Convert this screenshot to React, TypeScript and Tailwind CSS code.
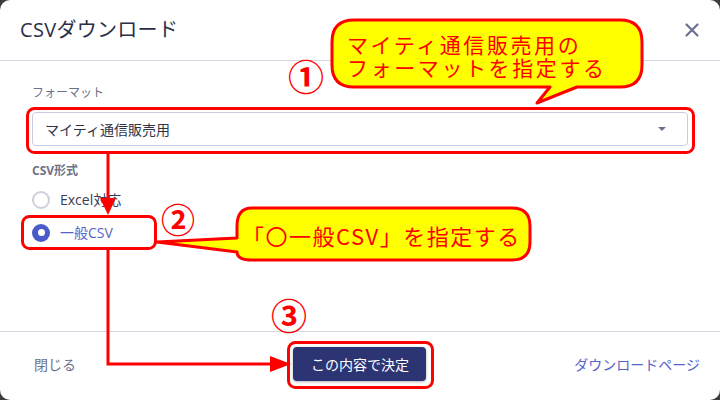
import React from "react";

const F = { fontFamily: '"Open Sans", "Noto Sans CJK JP", sans-serif' };
const J = { fontFamily: '"Noto Sans CJK JP", sans-serif' };

export default function App() {
  return (
    <div className="relative w-[720px] h-[400px] bg-[#3c3c3c] overflow-hidden" style={F}>
      <div className="w-full h-full rounded-[10px] bg-white flex flex-col">
        <div className="h-[61px] shrink-0 px-5 flex items-center justify-between border-b border-[#d3d6e0]">
          <div className="text-[20px] text-[#2a2e46] leading-none tracking-[0.3px]">CSVダウンロード</div>
          <svg width="16" height="16" viewBox="0 0 16 16">
            <path d="M2.5 2.5 L13.5 13.5 M13.5 2.5 L2.5 13.5" stroke="#6d7190" strokeWidth="2.2" strokeLinecap="round" />
          </svg>
        </div>
        <div className="flex-1 px-8 pt-[24px] flex flex-col">
          <div className="text-[12px] leading-4 text-[#6e7287]">フォーマット</div>
          <div className="mt-[11px] h-[34px] rounded-[4px] border border-[#c9cce0] flex items-center justify-between pl-3 pr-[20px]">
            <span className="text-[14px] text-[#2f3348]">マイティ通信販売用</span>
            <svg width="10" height="6" viewBox="0 0 10 6"><path d="M1 1 L9 1 L5 5 Z" fill="#6d7190" /></svg>
          </div>
          <div className="mt-[17px] text-[12px] leading-4 font-bold text-[#6e7287]">CSV形式</div>
          <div className="mt-[4px] h-[33px] flex items-center gap-[10px]">
            <span className="w-[18px] h-[18px] rounded-full border-2 border-[#cdd0dc] bg-white" />
            <span className="text-[14px] text-[#383c54]">Excel対応</span>
          </div>
          <div className="h-[33px] flex items-center gap-[10px]">
            <span className="w-[18px] h-[18px] rounded-full bg-[#4a5bc8] flex items-center justify-center">
              <span className="w-[7px] h-[7px] rounded-full bg-white" />
            </span>
            <span className="text-[14px] text-[#5464c8]">一般CSV</span>
          </div>
        </div>
        <div className="h-[69px] shrink-0 border-t border-[#d3d6e0] grid grid-cols-3 items-center px-[20px] pb-[4px]">
          <span className="justify-self-start pl-[14px] text-[14px] text-[#6e7287]">閉じる</span>
          <button className="justify-self-center w-[133px] h-[34px] rounded-[4px] bg-[#2d3474] text-white text-[14px] shadow-[0_1px_3px_rgba(0,0,0,0.3)]">この内容で決定</button>
          <span className="justify-self-end text-[14px] text-[#5665cc]">ダウンロードページ</span>
        </div>
      </div>

      {/* annotations */}
      <svg className="absolute left-0 top-0 pointer-events-none" width="720" height="400" viewBox="0 0 720 400">
        <path d="M354 20 H620 Q642 20 642 42 V65 Q642 87 620 87 H577 L537 103 L550 87 H354 Q332 87 332 65 V42 Q332 20 354 20 Z" fill="#ffff00" stroke="#ff0000" strokeWidth="3" strokeLinejoin="round" />
        <path d="M252 208 H512 Q530 208 530 226 V242 Q530 260 512 260 H252 Q237 260 237 252 L157 242 L237 238 V226 Q237 208 252 208 Z" fill="#ffff00" stroke="#ff0000" strokeWidth="3" strokeLinejoin="round" />
        <rect x="27.5" y="108.5" width="666" height="44" rx="7" fill="none" stroke="#ff0000" strokeWidth="3" />
        <rect x="22.5" y="216.5" width="133" height="32" rx="7" fill="none" stroke="#ff0000" strokeWidth="3" />
        <rect x="288.5" y="342.5" width="144" height="45" rx="7" fill="none" stroke="#ff0000" strokeWidth="3" />
        <line x1="108" y1="154" x2="108" y2="200" stroke="#ff0000" strokeWidth="3" />
        <path d="M100 198 L116 198 L108 215 Z" fill="#ff0000" />
        <path d="M108 249 V364 H272" fill="none" stroke="#ff0000" strokeWidth="3" />
        <path d="M270 356 L291 364 L270 372 Z" fill="#ff0000" />
      </svg>
      <div className="absolute left-[347px] top-[33px] text-[21px] leading-[23px] tracking-[2.6px] text-[#ff0000]" style={J}>
        マイティ通信販売用の<br />フォーマットを指定する
      </div>
      <div className="absolute left-[242px] top-[222px] text-[22px] leading-[26px] tracking-[1.5px] text-[#ff0000]" style={J}>「〇一般CSV」を指定する</div>
      <div className="absolute left-[288px] top-[55px] text-[36px] leading-[40px] font-bold text-[#ff0000]" style={J}>①</div>
      <div className="absolute left-[161px] top-[199px] text-[34px] leading-[40px] font-bold text-[#ff0000]" style={J}>②</div>
      <div className="absolute left-[271px] top-[294px] text-[36px] leading-[40px] font-bold text-[#ff0000]" style={J}>③</div>
    </div>
  );
}
